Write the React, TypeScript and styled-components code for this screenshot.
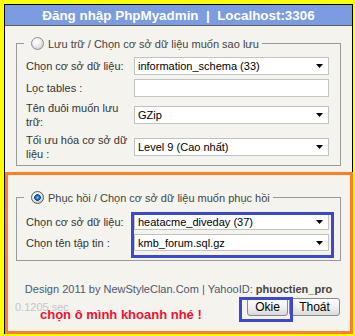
import React from 'react';
import styled, { createGlobalStyle } from 'styled-components';

const Global = createGlobalStyle`
  html, body { margin: 0; padding: 0; background: #ffff00; }
  body { font-family: "Liberation Sans", Arial, sans-serif; }
`;

const Page = styled.div`
  padding: 4px 0 0 4px;
`;

const Window = styled.div`
  position: relative;
  width: 349px;
  height: 330px;
  box-sizing: border-box;
  border: 1px solid #000;
  background: #f4f3ee;
  display: flex;
  flex-direction: column;
`;

const TitleBar = styled.div`
  height: 20px;
  flex: none;
  background: #7b9ce1;
  border-bottom: 1px solid #5e5e5e;
  color: #fff;
  font-weight: bold;
  font-size: 13.4px;
  display: flex;
  align-items: center;
  justify-content: center;
  white-space: pre;
`;

const Body = styled.div`
  padding: 10px 11px 0 11px;
  display: flex;
  flex-direction: column;
`;

const Group = styled.fieldset<{ $top: number; $pt: number; $pb: number }>`
  margin: ${(p) => p.$top}px 0 0 0;
  padding: ${(p) => p.$pt}px 10px ${(p) => p.$pb}px 9px;
  border: 1px solid #9a9a9a;
  min-width: 0;
`;

const Legend = styled.legend`
  padding: 0 3px;
  margin-left: -2px;
  height: 15px;
  display: flex;
  align-items: center;
  gap: 4px;
  font-size: 11px;
  color: #444;
`;

const Radio = styled.input.attrs({ type: 'radio' })`
  appearance: none;
  -webkit-appearance: none;
  margin: 0 0 0 4px;
  width: 13px;
  height: 13px;
  box-sizing: border-box;
  border-radius: 50%;
  border: 1px solid #8e8e8e;
  flex: none;
  background: radial-gradient(circle at 40% 35%, #ffffff 0%, #ececec 45%, #bdbdbd 100%);
  &:checked {
    border-color: #555c66;
    background:
      radial-gradient(circle at 50% 50%, #7fc4ff 0, #1f67c8 2px, #0d3f86 3px, transparent 3.6px),
      radial-gradient(circle at 40% 35%, #ffffff 0%, #e4e4e4 50%, #a9a9a9 100%);
  }
`;

const Form = styled.div`
  display: grid;
  grid-template-columns: 108px 195px;
  row-gap: 4px;
  align-items: center;
`;

const Label = styled.div`
  font-size: 11px;
  line-height: 14px;
  color: #333;
  padding-right: 6px;
`;

const Field = styled.div<{ $h: number }>`
  height: ${(p) => p.$h}px;
  box-sizing: border-box;
  border: 1px solid #c2c2c2;
  background: #fff;
  display: flex;
  align-items: center;
  justify-content: space-between;
  padding: 0 5px 0 3px;
  font-size: 11px;
  color: #000;
  white-space: nowrap;
`;

const Arrow = () => (
  <svg width="7" height="4" viewBox="0 0 7 4">
    <path d="M0 0 H7 L3.5 4 Z" fill="#000" />
  </svg>
);

const Select = ({ value, h = 18 }: { value: string; h?: number }) => (
  <Field $h={h}>
    <span>{value}</span>
    <Arrow />
  </Field>
);

const Credit = styled.div`
  margin-top: 22px;
  text-align: center;
  font-size: 11px;
  line-height: 13px;
  color: #4e5870;
  b {
    color: #444;
  }
`;

const BottomRow = styled.div`
  display: flex;
  align-items: center;
  justify-content: space-between;
  padding: 0 12px 0 10px;
  margin-top: 2px;
`;

const Timing = styled.span`
  font-size: 11px;
  color: #c6c6c6;
`;

const Buttons = styled.div`
  display: flex;
  gap: 1px;
`;

const Button = styled.button<{ $w: number }>`
  width: ${(p) => p.$w}px;
  height: 18px;
  padding: 0;
  font: 12px "Liberation Sans", Arial, sans-serif;
  color: #000;
  border: 1px solid #8a8a8a;
  border-radius: 3px;
  background: linear-gradient(#ffffff, #efefef 55%, #d9d9d9);
`;

const OrangeFrame = styled.div`
  position: absolute;
  left: 0;
  top: 167px;
  width: 348px;
  height: 162px;
  box-sizing: border-box;
  border: 3px solid #ff7f27;
  pointer-events: none;
`;

const SelectMark = styled.div`
  position: absolute;
  left: 126px;
  top: 207px;
  width: 203px;
  height: 46px;
  box-sizing: border-box;
  border: 3px solid #3f48cc;
  pointer-events: none;
`;

const ButtonMark = styled.div`
  position: absolute;
  left: 234px;
  top: 292px;
  width: 54px;
  height: 25px;
  box-sizing: border-box;
  border: 3px solid #3f48cc;
  pointer-events: none;
`;

const Hint = styled.div`
  position: absolute;
  left: 35px;
  top: 302px;
  font-size: 13px;
  line-height: 16px;
  font-weight: bold;
  color: #ee1133;
  white-space: nowrap;
`;

export default function App() {
  return (
    <Page>
      <Global />
      <Window>
        <TitleBar>{'Đăng nhập PhpMyadmin  |  Localhost:3306'}</TitleBar>
        <Body>
          <Group $top={0} $pt={6} $pb={4}>
            <Legend>
              <Radio name="mode" />
              <span>Lưu trữ / Chọn cơ sở dữ liệu muốn sao lưu</span>
            </Legend>
            <Form>
              <Label>Chọn cơ sở dữ liệu:</Label>
              <Select value="information_schema (33)" />
              <Label>Lọc tables :</Label>
              <Field $h={18} />
              <Label>Tên đuôi muốn lưu trữ:</Label>
              <Select value="GZip" />
              <Label>Tối ưu hóa cơ sở dữ liệu :</Label>
              <Select value="Level 9 (Cao nhất)" />
            </Form>
          </Group>
          <Group $top={24} $pt={8} $pb={9}>
            <Legend>
              <Radio name="mode" defaultChecked />
              <span>Phục hồi / Chọn cơ sở dữ liệu muốn phục hồi</span>
            </Legend>
            <Form>
              <Label>Chọn cơ sở dữ liệu:</Label>
              <Select value="heatacme_diveday (37)" h={17} />
              <Label>Chọn tên tập tin :</Label>
              <Select value="kmb_forum.sql.gz" h={17} />
            </Form>
          </Group>
        </Body>
        <Credit>
          Design 2011 by NewStyleClan.Com | YahooID: <b>phuoctien_pro</b>
        </Credit>
        <BottomRow>
          <Timing>0.1205 sec</Timing>
          <Buttons>
            <Button $w={41}>Okie</Button>
            <Button $w={51}>Thoát</Button>
          </Buttons>
        </BottomRow>
        <OrangeFrame />
        <SelectMark />
        <ButtonMark />
        <Hint>chọn ô mình khoanh nhé !</Hint>
      </Window>
    </Page>
  );
}
